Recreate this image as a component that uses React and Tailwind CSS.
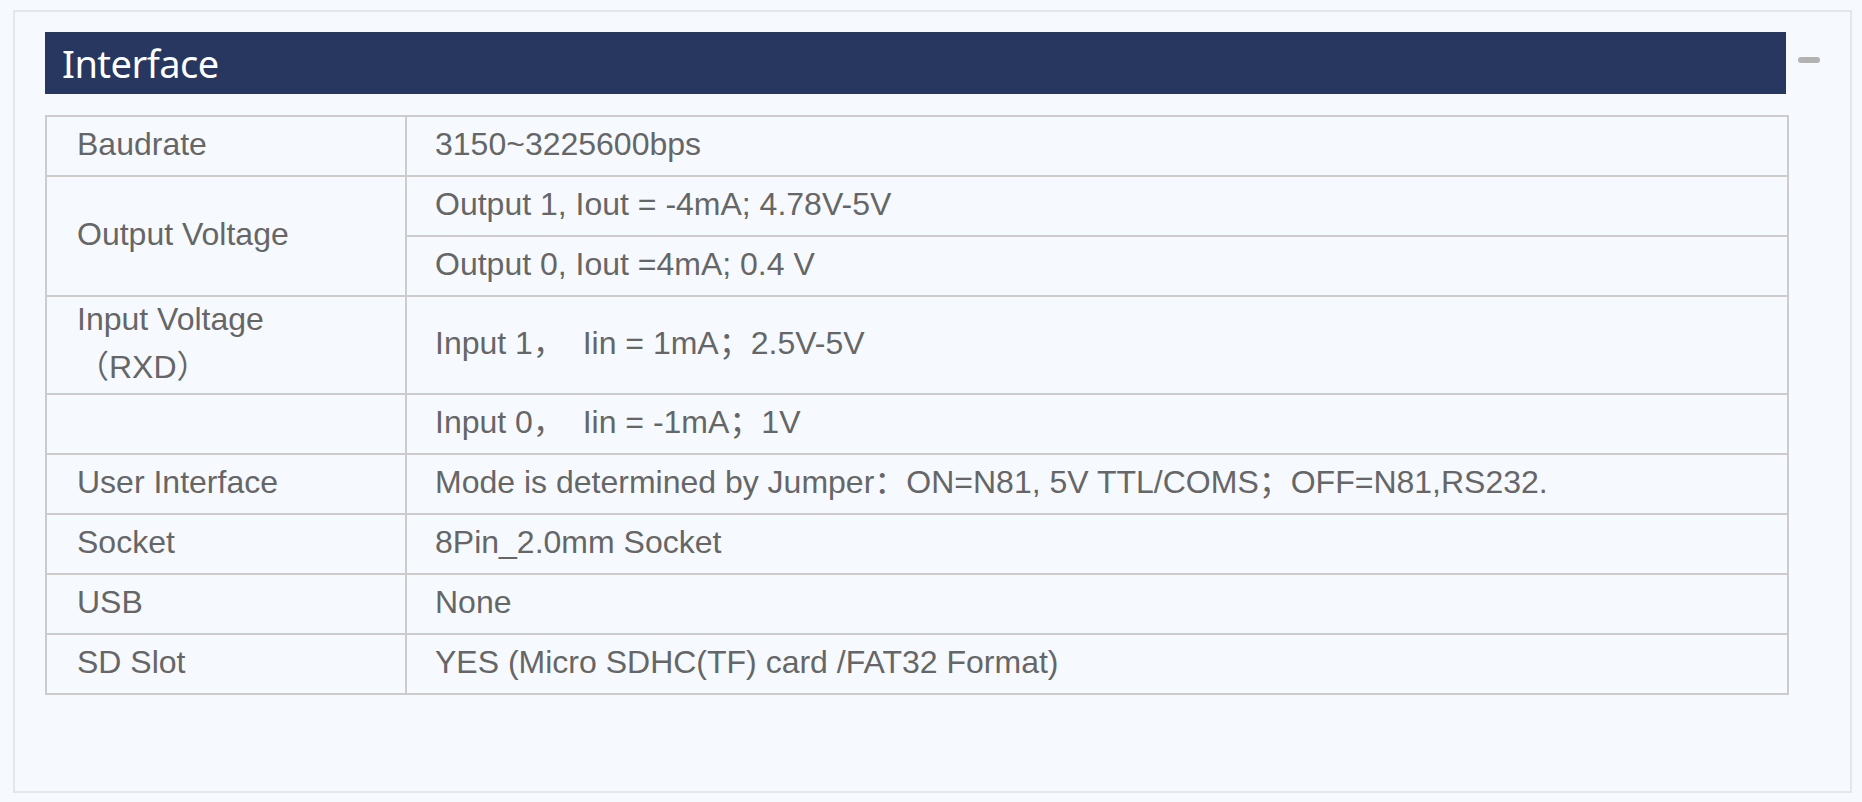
import React from 'react';

const rows = [
  { label: 'Baudrate', value: '3150~3225600bps' },
  { label: 'Output Voltage', value: 'Output 1, Iout = -4mA; 4.78V-5V', span: 2 },
  { value: 'Output 0, Iout =4mA; 0.4 V' },
  { label: 'Input Voltage', label2: '（RXD）', value: 'Input 1，  Iin = 1mA；2.5V-5V', tall: true },
  { label: '', value: 'Input 0，  Iin = -1mA；1V' },
  { label: 'User Interface', value: 'Mode is determined by Jumper：ON=N81, 5V TTL/COMS；OFF=N81,RS232.' },
  { label: 'Socket', value: '8Pin_2.0mm Socket' },
  { label: 'USB', value: 'None' },
  { label: 'SD Slot', value: 'YES (Micro SDHC(TF) card /FAT32 Format)' },
];

const cell = 'border-r-2 border-b-2 border-[#cccccc] flex items-center pb-[5px] whitespace-pre';

const App = () => {
  return (
    <div className="min-h-screen bg-[#f6faff] pt-[10px] pl-[13px] pr-[10px] font-['Liberation_Sans','Noto_Sans_CJK_SC',sans-serif]">
      <div className="h-[783px] border-2 border-[#e4e6e9] pl-[30px] pt-[20px] flex">
        <div className="w-[1744px]">
          <div className="h-[62px] w-[1741px] bg-[#283760] flex items-center pl-[17px]">
            <span className="text-white text-[38px] leading-none font-['Noto_Sans',sans-serif] tracking-[-0.5px]">
              Interface
            </span>
          </div>

          {/* spec table */}
          <div className="mt-[21px] grid grid-cols-[360px_1fr] border-t-2 border-l-2 border-[#cccccc] text-[32px] leading-[48px] text-[#666666]">
            {rows.map((r, i) => {
              const h = r.tall ? 'h-[98px]' : 'h-[60px]';
              return (
                <React.Fragment key={i}>
                  {r.label !== undefined && (
                    <div
                      className={`${cell} pl-[30px] ${r.span ? 'row-span-2' : h}`}
                    >
                      {r.label2 ? (
                        <span>
                          {r.label}
                          <br />
                          {r.label2}
                        </span>
                      ) : (
                        r.label
                      )}
                    </div>
                  )}
                  <div className={`${cell} pl-[28px] ${h}`}>{r.value}</div>
                </React.Fragment>
              );
            })}
          </div>
        </div>

        <div className="ml-[9px] pt-[25px]">
          <div className="w-[22px] h-[6px] rounded-[3px] bg-[#b2b2b2]" />
        </div>
      </div>
    </div>
  );
};

export default App;
